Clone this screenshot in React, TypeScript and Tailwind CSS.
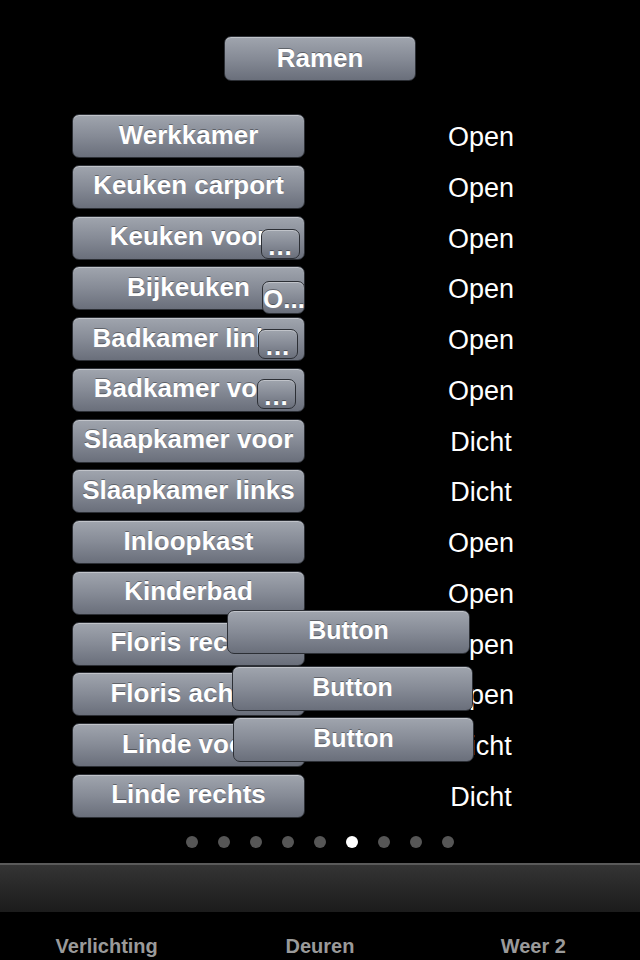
import React from "react";

const btn =
  "rounded-[7px] border border-[#2c2f35] bg-linear-to-b from-[#a0a5ae] via-[#868b96] to-[#6a6f7b] shadow-[inset_0_1px_0_rgba(255,255,255,0.35)] text-white font-bold flex items-center justify-center whitespace-nowrap overflow-hidden [text-shadow:0_-1px_0_rgba(0,0,0,0.35)]";

const rows: { name: string; state: string }[] = [
  { name: "Werkkamer", state: "Open" },
  { name: "Keuken carport", state: "Open" },
  { name: "Keuken voor", state: "Open" },
  { name: "Bijkeuken", state: "Open" },
  { name: "Badkamer links", state: "Open" },
  { name: "Badkamer voor", state: "Open" },
  { name: "Slaapkamer voor", state: "Dicht" },
  { name: "Slaapkamer links", state: "Dicht" },
  { name: "Inloopkast", state: "Open" },
  { name: "Kinderbad", state: "Open" },
  { name: "Floris rechts", state: "Open" },
  { name: "Floris achter", state: "Open" },
  { name: "Linde voor", state: "Dicht" },
  { name: "Linde rechts", state: "Dicht" },
];

export default function App() {
  return (
    <div
      className="relative w-[640px] h-[960px] bg-black overflow-hidden flex flex-col"
      style={{ fontFamily: '"Liberation Sans", Arial, sans-serif' }}
    >
      <div className="pt-[36px] flex justify-center">
        <div className={`${btn} w-[192px] h-[45px] text-[26px]`}>Ramen</div>
      </div>

      <div className="mt-[33px] flex flex-col gap-[6.77px]">
        {rows.map((r) => (
          <div key={r.name} className="flex items-center h-[44px]">
            <div className={`${btn} ml-[72px] w-[233px] h-[44px] text-[26px] pb-[2px]`}>{r.name}</div>
            <div className="ml-[106px] w-[140px] text-center text-white text-[27px] leading-none pt-[3px]">
              {r.state}
            </div>
          </div>
        ))}
      </div>

      <div className="mt-[18px] flex justify-center gap-[20px]">
        {[0, 1, 2, 3, 4, 5, 6, 7, 8].map((i) => (
          <div
            key={i}
            className={`w-[12px] h-[12px] rounded-full ${i === 5 ? "bg-white" : "bg-[#565656]"}`}
          />
        ))}
      </div>

      <div className="mt-[15px] h-[49px] border-t-2 border-[#5a5a5a] bg-linear-to-b from-[#343434] to-[#1c1c1c]" />

      <div className="grid grid-cols-3 pt-[24px] text-[#9a9a9a] font-bold text-[20px] text-center leading-none">
        <div>Verlichting</div>
        <div>Deuren</div>
        <div>Weer 2</div>
      </div>

      {/* overlapping small buttons */}
      <div className={`${btn} absolute left-[261px] top-[229px] w-[39px] h-[30px] text-[26px] pt-[4px] tracking-[1px]`}>...</div>
      <div className={`${btn} absolute left-[262px] top-[281px] w-[43px] h-[33px] text-[26px] justify-start pt-[4px]`}>O...</div>
      <div className={`${btn} absolute left-[258px] top-[329px] w-[40px] h-[30px] text-[26px] pt-[4px] tracking-[1px]`}>...</div>
      <div className={`${btn} absolute left-[257px] top-[379px] w-[39px] h-[30px] text-[26px] pt-[4px] tracking-[1px]`}>...</div>

      {/* overlapping wide buttons */}
      <div className={`${btn} absolute left-[227px] top-[610px] w-[243px] h-[44px] text-[25px] pb-[2px]`}>Button</div>
      <div className={`${btn} absolute left-[232px] top-[666px] w-[241px] h-[45px] text-[25px] pb-[2px]`}>Button</div>
      <div className={`${btn} absolute left-[233px] top-[717px] w-[241px] h-[45px] text-[25px] pb-[2px]`}>Button</div>
    </div>
  );
}
